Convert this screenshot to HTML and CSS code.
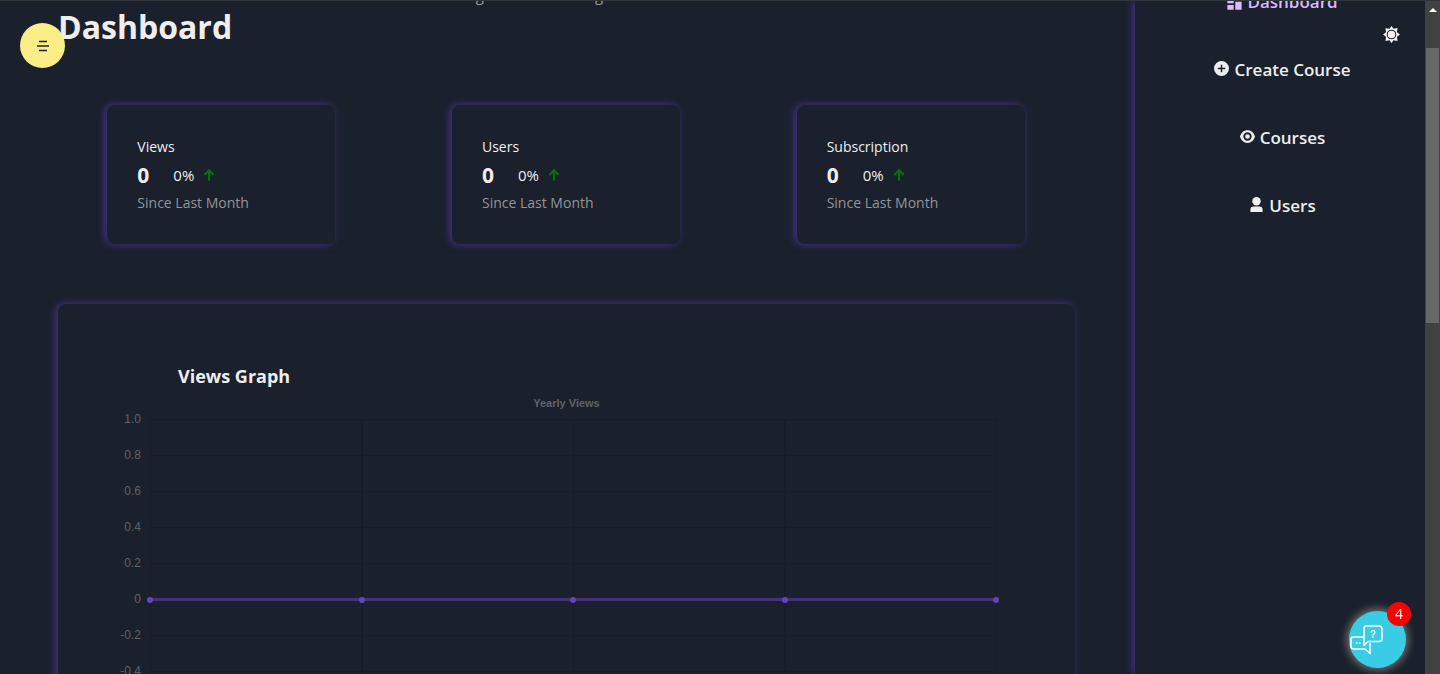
FILE: index.html
```html
<!DOCTYPE html>
<html lang="en">
<head>
<meta charset="utf-8">
<title>Dashboard</title>
<link rel="stylesheet" href="styles.css">
</head>
<body>
<div class="page">
  <main class="main">
    <div class="banner" aria-hidden="true"><span>g</span><span>g</span></div>
    <h1 class="title">Dashboard</h1>
    <section class="stats">
      <article class="card">
        <p>Views</p>
        <p class="figures"><strong>0</strong><span>0%</span><svg class="arrow" viewBox="0 0 12 12"><path d="M6 11.500V1.500M1.200 6 6 1.200 10.800 6"/></svg></p>
        <p class="since">Since Last Month</p>
      </article>
      <article class="card">
        <p>Users</p>
        <p class="figures"><strong>0</strong><span>0%</span><svg class="arrow" viewBox="0 0 12 12"><path d="M6 11.500V1.500M1.200 6 6 1.200 10.800 6"/></svg></p>
        <p class="since">Since Last Month</p>
      </article>
      <article class="card">
        <p>Subscription</p>
        <p class="figures"><strong>0</strong><span>0%</span><svg class="arrow" viewBox="0 0 12 12"><path d="M6 11.500V1.500M1.200 6 6 1.200 10.800 6"/></svg></p>
        <p class="since">Since Last Month</p>
      </article>
    </section>
    <section class="panel">
      <h2>Views Graph</h2>
      <div class="chart">
        <h3>Yearly Views</h3>
        <div class="chart-body">
          <div class="axis"><span>1.0</span><span>0.8</span><span>0.6</span><span>0.4</span><span>0.2</span><span>0</span><span>-0.2</span><span>-0.4</span></div>
          <div class="plot">
            <div class="series"><i></i><i></i><i></i><i></i><i></i></div>
          </div>
        </div>
      </div>
    </section>
  </main>
  <aside class="sidebar">
    <nav>
      <a href="#" class="active"><svg viewBox="0 0 24 24"><path d="M3 13h8V3H3v10zm0 8h8v-6H3v6zm10 0h8V11h-8v10zm0-18v6h8V3h-8z"/></svg>Dashboard</a>
      <a href="#"><svg viewBox="0 0 16 16"><path fill-rule="evenodd" d="M8 0a8 8 0 1 0 0 16A8 8 0 0 0 8 0zM7.200 4h1.600v3.200H12v1.600H8.800V12H7.200V8.800H4V7.200h3.200z"/></svg>Create Course</a>
      <a href="#"><svg viewBox="0 0 16 16"><path fill-rule="evenodd" d="M8 1.200C4 1.200 1 4 0 8c1 4 4 6.800 8 6.800S15 12 16 8c-1-4-4-6.800-8-6.800zM8 3.500a4.500 4.500 0 1 1 0 9 4.500 4.500 0 0 1 0-9zM8 5.500a2.500 2.500 0 1 0 0 5 2.500 2.500 0 0 0 0-5z"/></svg>Courses</a>
      <a href="#"><svg viewBox="0 0 16 16"><circle cx="8" cy="4.500" r="4.500"/><path d="M1.500 16v-2.500q0-3.500 3.500-3.500h6q3.500 0 3.500 3.500V16z"/></svg>Users</a>
    </nav>
  </aside>
  <div class="scrollbar" aria-hidden="true"><span class="scroll-arrow"></span><span class="thumb"></span></div>
</div>
<button class="menu" aria-label="Menu"><svg viewBox="0 0 12 12"><path d="M2 1.500h8M0 6h12M2 10.500h8"/></svg></button>
<button class="theme" aria-label="Toggle theme"><svg viewBox="0 0 16 16"><path d="M8 0l1.900 2.600 3.800-.6-.6 3.800L16 8l-2.900 2.200.6 3.800-3.800-.6L8 16l-1.900-2.600-3.800.6.6-3.800L0 8l2.900-2.200L2.300 2l3.800.6z"/><circle cx="8" cy="8" r="4"/></svg></button>
<button class="chat" aria-label="Chat, 4 unread">
  <svg viewBox="0 0 34 30"><path d="M14 12H3.500Q1 12 1 14.500v7Q1 24 3.500 24H15l5 4.500V18.500"/><path d="M16 1h13q3 0 3 3v9.500q0 3-3 3H18l-4 4V4q0-3 2-3z"/><path d="M6.500 18h.500M9.500 18h.500"/><text x="23" y="13">?</text></svg>
  <span class="badge">4</span>
</button>
</body>
</html>
```
FILE: styles.css
```css
* { box-sizing: border-box; margin: 0; }
body { height: 100vh; overflow: hidden; background: #1a202c; color: #eee; font: 14px/28px "Open Sans", "Noto Sans", sans-serif; }
button { border: 0; padding: 0; border-radius: 50%; cursor: pointer; display: grid; place-items: center; }
.page { display: grid; grid-template-columns: 1fr 290px 15px; height: 100vh; border-top: 1px solid #34363d; }
.main { min-width: 0; overflow: hidden; }

.banner { display: flex; justify-content: center; gap: 111px; height: 2px; align-items: flex-end; padding-right: 56px; color: #999; font-size: 15px; line-height: 16px; }
.title { padding-left: 58px; margin-top: 2px; font-size: 32px; line-height: 44px; font-weight: 700; }
.stats { display: grid; grid-template-columns: repeat(3, 1fr); justify-items: center; padding: 56px 52px 60px 49px; }
.card { width: 228px; height: 139px; padding: 28px 30px; border-radius: 8px; background: #1a202c; box-shadow: -2px 0 8px #4a3490; }
.figures { display: flex; align-items: center; font-size: 15px; }
.figures strong { width: 36px; font-size: 21px; }
.arrow { width: 12px; height: 12px; margin-left: 9px; fill: none; stroke: #076f0c; stroke-width: 2; }
.since { color: #939498; }

.panel { margin: 0 60px 0 58px; padding: 57px 62px; border-radius: 8px; background: #1a202c; box-shadow: -2px 0 8px #4a3490; }
.panel h2 { padding-left: 58px; font-size: 18px; line-height: 30px; font-weight: 700; }
.chart { padding-top: 2px; font: 12px/36px "Liberation Sans", Arial, sans-serif; color: #606266; }
.chart h3 { font-size: 11px; line-height: 20px; text-align: center; }
.chart-body { display: flex; gap: 9px; padding: 6px 16px 0 0; }
.axis { width: 21px; margin-top: -18px; display: flex; flex-direction: column; text-align: right; }
.plot { flex: 1; height: 360px; border-right: 1px solid #181c27; background: repeating-linear-gradient(#181c27 0 1px, transparent 1px 36px), repeating-linear-gradient(90deg, #181c27 0 1px, transparent 1px 25%); }
.series { display: flex; justify-content: space-between; align-items: center; height: 3px; margin: 179px -3px 0; background: #472f7c; }
.series i { width: 6px; height: 6px; border-radius: 50%; background: #6842bd; }

.sidebar { overflow: hidden; z-index: 1; background: #1a202c; box-shadow: -2px 0 8px #4a3490; clip-path: inset(0 0 0 -16px); }
.sidebar nav { display: flex; flex-direction: column; align-items: center; gap: 44px; margin-top: -11px; padding-left: 5px; }
.sidebar a { display: flex; align-items: center; gap: 5px; color: #eee; font-size: 17px; line-height: 24px; font-weight: 600; text-decoration: none; }
.sidebar svg { width: 15px; height: 15px; margin-bottom: 3px; fill: currentColor; }
.sidebar .active { color: #dcb9ff; }
.sidebar .active svg { width: 19px; height: 19px; margin: 0 -2px; }

.scrollbar { z-index: 2; background: #424242; }
.scroll-arrow { display: block; width: 0; margin: 7px auto 0; border: 4px solid transparent; border-top: 0; border-bottom-color: #fff; }
.thumb { display: block; height: 275px; margin: 36px 1px 0; background: #686868; }

.menu { position: fixed; left: 20px; top: 23px; width: 45px; height: 45px; background: #fbee86; z-index: 3; }
.menu svg { width: 12px; height: 12px; fill: none; stroke: #241f30; stroke-width: 1.300; }
.theme { position: fixed; right: 40px; top: 26px; width: 17px; height: 17px; background: none; z-index: 3; }
.theme svg { width: 17px; height: 17px; fill: #f4f4f4; }
.theme circle { stroke: #1a202c; stroke-width: 1; }
.chat { position: fixed; right: 34px; bottom: 6px; width: 57px; height: 57px; padding-left: 1px; background: #38cce5; box-shadow: 0 0 8px 2px #777; z-index: 3; justify-items: start; }
.chat svg { width: 34px; height: 30px; fill: #38cce5; stroke: #fff; stroke-width: 1.600; stroke-linejoin: round; stroke-linecap: round; }
.chat text { fill: #fff; stroke: none; font: bold 10px "Liberation Sans", Arial, sans-serif; text-anchor: middle; }
.badge { position: absolute; right: -5px; top: -9px; width: 24px; height: 24px; border-radius: 50%; background: #f00; color: #fff; font: 14px/24px "Open Sans", sans-serif; }
```
